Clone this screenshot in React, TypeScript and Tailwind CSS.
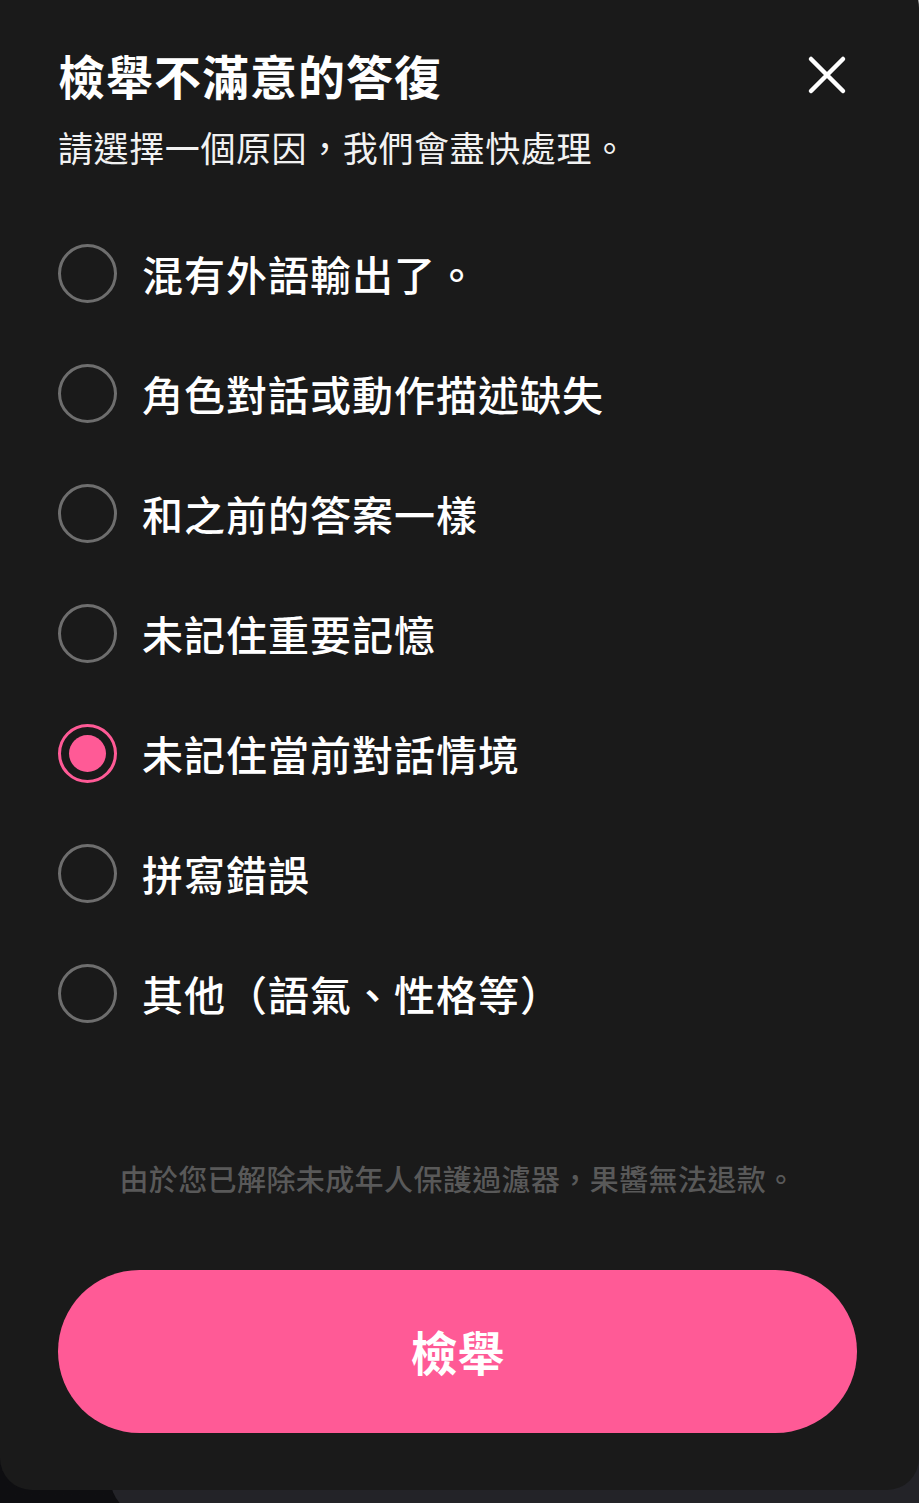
import { useState } from 'react';

const reasons = [
  '混有外語輸出了。',
  '角色對話或動作描述缺失',
  '和之前的答案一樣',
  '未記住重要記憶',
  '未記住當前對話情境',
  '拼寫錯誤',
  '其他（語氣、性格等）',
];

export default function App() {
  const [picked, setPicked] = useState(4);

  return (
    <div
      className="relative h-[1503px] w-full overflow-hidden bg-gradient-to-b from-[#b4b4b4] via-[#0e0e11] to-[#0e0e11]"
      style={{ fontFamily: '"Noto Sans CJK TC", "Noto Sans CJK SC", "Noto Sans", sans-serif' }}
    >
      {/* card sitting behind the sheet */}
      <div className="absolute left-[110px] right-[-30px] top-[200px] bottom-[-14px] rounded-[40px] bg-[#232328]" />

      <div className="relative z-10 -mt-[24px] flex h-[1514px] flex-col rounded-tr-[32px] rounded-b-[32px] bg-[#1a1a1a] pt-[71px] pb-[57px] pl-[58px] pr-[62px]">
        <div className="flex items-center justify-between">
          <h1 className="text-[47px] font-bold leading-[56px] tracking-[1px] text-white">檢舉不滿意的答復</h1>
          <button className="mr-[10px] flex h-[40px] w-[40px] items-center justify-center">
            <svg width="40" height="40" viewBox="0 0 40 40" fill="none">
              <path d="M4 4 L36 36 M36 4 L4 36" stroke="#ffffff" strokeWidth="4.5" strokeLinecap="round" />
            </svg>
          </button>
        </div>
        <p className="mt-[22px] text-[35px] leading-[44px] tracking-[0.6px] text-[#f2f2f2]">請選擇一個原因，我們會盡快處理。</p>

        <div className="mt-[44px] flex flex-col">
          {reasons.map((r, i) => (
            <button key={r} onClick={() => setPicked(i)} className="flex h-[120px] items-center gap-[25px] text-left">
              {picked === i ? (
                <span className="flex h-[59px] w-[59px] shrink-0 items-center justify-center rounded-full border-[3px] border-[#ff5a96]">
                  <span className="h-[37px] w-[37px] rounded-full bg-[#ff5a96]" />
                </span>
              ) : (
                <span className="h-[59px] w-[59px] shrink-0 rounded-full border-[3px] border-[#6e6e6e]" />
              )}
              <span className="text-[41px] font-medium leading-[50px] tracking-[1px] text-white">{r}</span>
            </button>
          ))}
        </div>

        <p className="mt-[105px] text-center text-[29px] font-medium leading-[40px] tracking-[0.4px] text-[#595959]">
          由於您已解除未成年人保護過濾器，果醬無法退款。
        </p>

        <button className="mt-[72px] h-[163px] w-full rounded-full bg-[#ff5a96] text-[47px] font-bold text-white">
          檢舉
        </button>
      </div>
    </div>
  );
}
